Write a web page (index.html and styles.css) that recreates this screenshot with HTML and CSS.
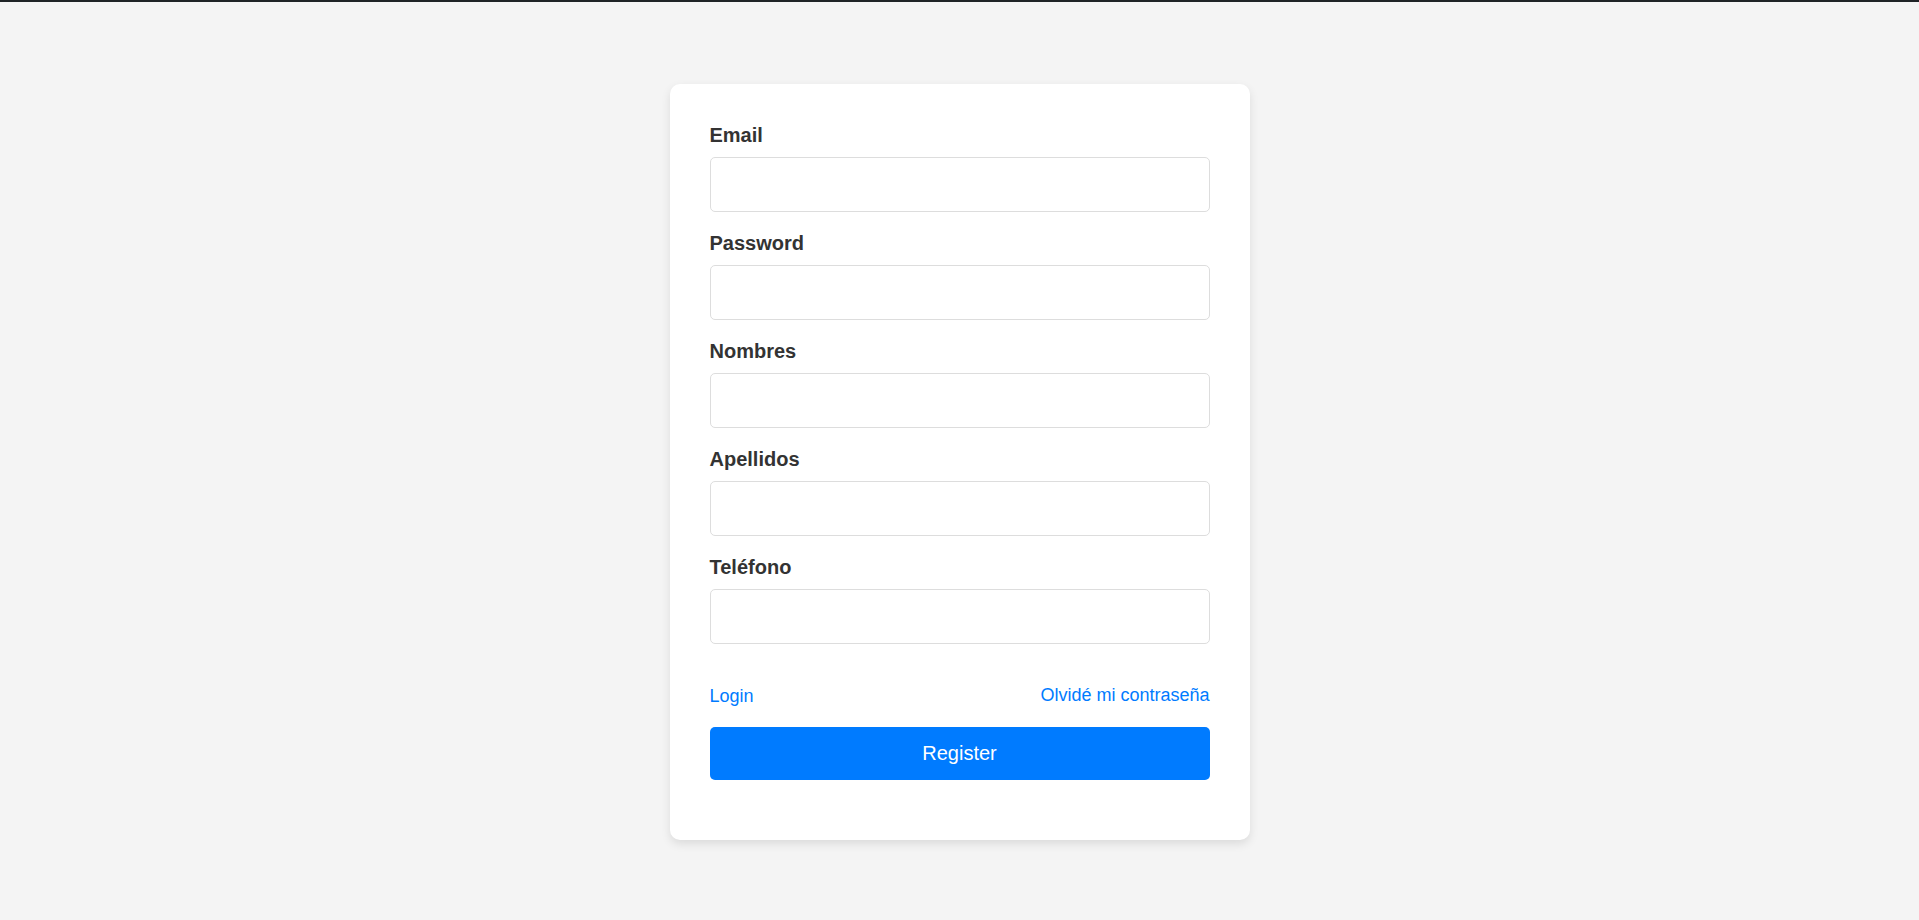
FILE: index.html
```html
<!DOCTYPE html>
<html lang="es">
<head>
<meta charset="utf-8">
<title>Register</title>
<link rel="stylesheet" href="styles.css">
</head>
<body>
<div class="topbar"></div>
<main class="page">
  <form class="card">
    <div class="field">
      <label class="label" for="email">Email</label>
      <input class="input" id="email" type="email">
    </div>
    <div class="field">
      <label class="label" for="password">Password</label>
      <input class="input" id="password" type="password">
    </div>
    <div class="field">
      <label class="label" for="nombres">Nombres</label>
      <input class="input" id="nombres" type="text">
    </div>
    <div class="field">
      <label class="label" for="apellidos">Apellidos</label>
      <input class="input" id="apellidos" type="text">
    </div>
    <div class="field">
      <label class="label" for="telefono">Teléfono</label>
      <input class="input" id="telefono" type="text">
    </div>
    <div class="links">
      <a class="link link-login" href="#">Login</a>
      <a class="link" href="#">Olvidé mi contraseña</a>
    </div>
    <button class="btn" type="button">Register</button>
  </form>
</main>
</body>
</html>
```

FILE: styles.css
```css
* { box-sizing: border-box; }
html, body {
  margin: 0;
  padding: 0;
}
body {
  background: #f4f4f4;
  font-family: "Liberation Sans", Arial, sans-serif;
  color: #333;
  min-height: 920px;
}
.topbar {
  height: 2px;
  background: #1f2326;
}
.page {
  display: flex;
  justify-content: center;
  padding-top: 82px;
}
.card {
  width: 580px;
  background: #fff;
  border-radius: 10px;
  padding: 40px;
  box-shadow: 0 4px 10px rgba(0, 0, 0, 0.1);
  display: flex;
  flex-direction: column;
}
.field {
  display: flex;
  flex-direction: column;
  margin-bottom: 20px;
}
.label {
  font-size: 20px;
  line-height: 23px;
  font-weight: bold;
  color: #333;
  margin-bottom: 10px;
}
.input {
  width: 100%;
  height: 55px;
  border: 1px solid #ddd;
  border-radius: 5px;
  background: #fff;
  font-size: 18px;
  padding: 0 12px;
  font-family: inherit;
}
.links {
  display: flex;
  justify-content: space-between;
  align-items: baseline;
  margin-top: 21px;
  height: 21px;
  font-size: 18px;
  line-height: 21px;
}
.link {
  color: #007bff;
  text-decoration: none;
}
.link-login {
  position: relative;
  top: 1px;
}
.btn {
  margin-top: 21px;
  margin-bottom: 20px;
  height: 53px;
  width: 100%;
  border: none;
  border-radius: 5px;
  background: #007bff;
  color: #fff;
  font-family: inherit;
  font-size: 20px;
  cursor: pointer;
}
```
